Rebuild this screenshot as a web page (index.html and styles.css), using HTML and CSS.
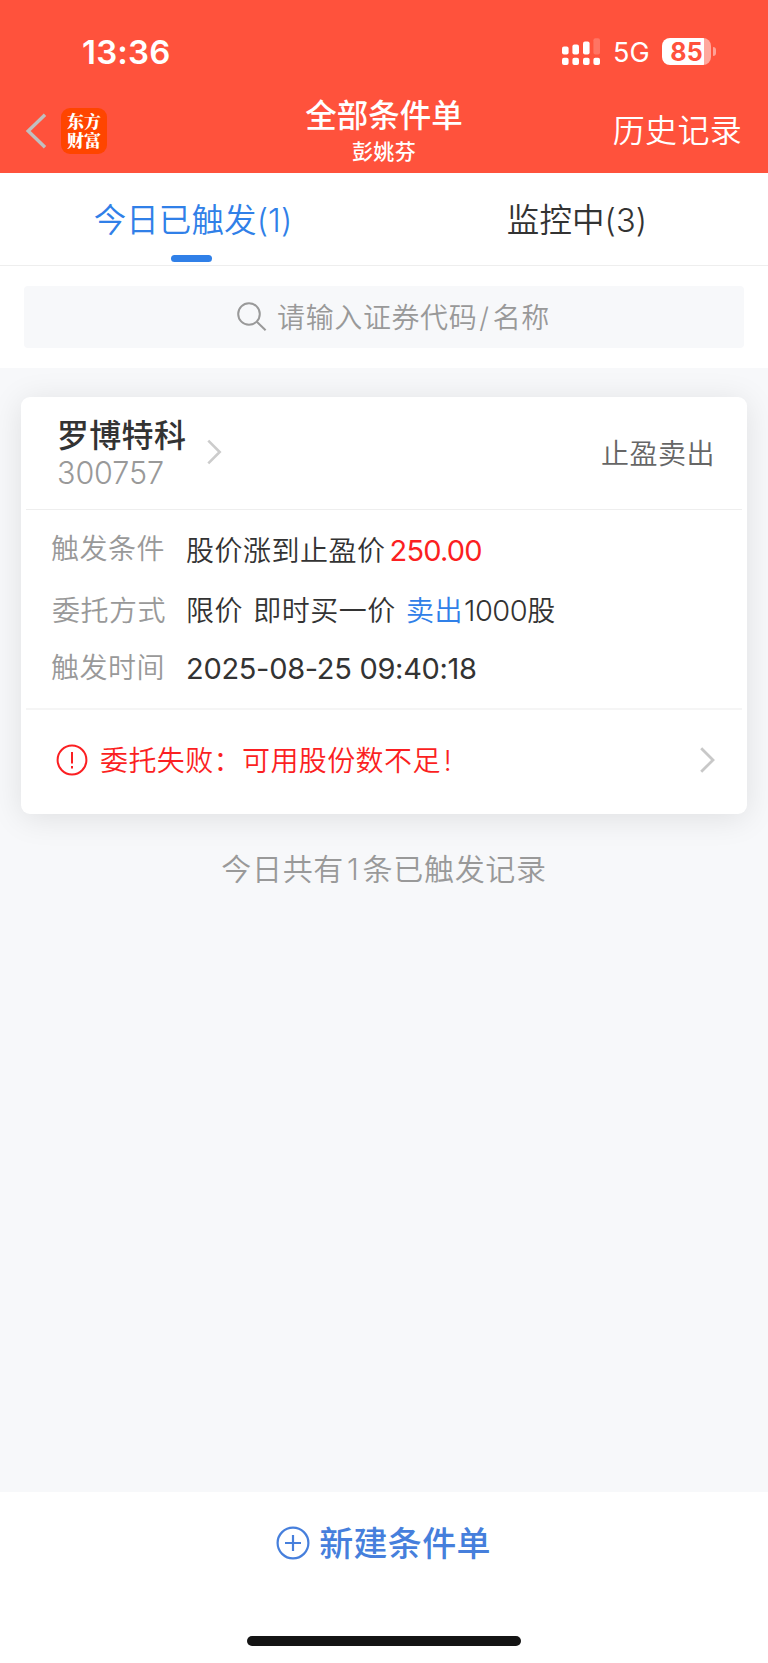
FILE: index.html
```html
<!DOCTYPE html>
<html lang="zh-CN">
<head>
<meta charset="utf-8">
<title>全部条件单</title>
<link rel="stylesheet" href="styles.css">
</head>
<body>
<div class="screen">
  <header class="top">
    <div class="status">
      <span class="time">13:36</span>
      <div class="status-right">
        <svg class="signal" width="40" height="28" viewBox="0 0 40 28" fill="#fff">
          <rect x="1" y="8.5" width="6.6" height="8" rx="2"/>
          <rect x="11.4" y="6.5" width="6.6" height="10" rx="2"/>
          <rect x="22" y="3.5" width="6.6" height="13" rx="2"/>
          <rect x="32.4" y="0.3" width="6.6" height="16.2" rx="2" opacity=".2"/>
          <rect x="1" y="19.7" width="6.6" height="7.3" rx="2"/>
          <rect x="11.4" y="19.7" width="6.6" height="7.3" rx="2"/>
          <rect x="22" y="19.7" width="6.6" height="7.3" rx="2"/>
          <rect x="32.4" y="19.7" width="6.6" height="7.3" rx="2"/>
        </svg>
        <span class="net">5G</span>
        <div class="battery"><div class="cell"><span class="level">85</span></div><i class="tip"></i></div>
      </div>
    </div>
    <nav class="nav">
      <div class="nav-left">
        <svg width="22" height="36" viewBox="0 0 22 36" fill="none" stroke="#c0bfbf" stroke-width="3.4"><path d="M20 1.8 3.2 18 20 34.2"/></svg>
        <div class="logo">东方<br>财富</div>
      </div>
      <div class="nav-title"><h1>全部条件单</h1><p>彭姚芬</p></div>
      <a class="history">历史记录</a>
    </nav>
  </header>
  <div class="tabs">
    <div class="tab active"><span>今日已触发<span class="count">(1)</span></span></div>
    <div class="tab"><span>监控中<span class="count">(3)</span></span></div>
  </div>
  <div class="search-wrap">
    <div class="search">
      <svg width="30" height="30" viewBox="0 0 30 30" fill="none" stroke="#999" stroke-width="2"><circle cx="12" cy="12" r="10.8"/><path d="m19.8 19.8 8.8 8.4"/></svg>
      <span>请输入证券代码<b class="slash">/</b>名称</span>
    </div>
  </div>
  <main class="content">
    <section class="card">
      <div class="card-head">
        <div class="stock"><div class="name">罗博特科</div><div class="code">300757</div></div>
        <svg class="go" width="15" height="26" viewBox="0 0 15 26" fill="none" stroke="#ccc" stroke-width="2.6"><path d="m1.3 1.6 11.4 11.4L1.3 24.4"/></svg>
        <div class="kind">止盈卖出</div>
      </div>
      <div class="rows">
        <div class="row r1"><span class="label">触发条件</span><span class="value">股价涨到止盈价<em class="price">250.00</em></span></div>
        <div class="row r2"><span class="label">委托方式</span><span class="value">限价 即时买一价 <em class="sell">卖出</em><span class="qty">1000</span>股</span></div>
        <div class="row r3"><span class="label">触发时间</span><span class="value date">2025-08-25 09:40:18</span></div>
      </div>
      <div class="fail">
        <svg width="32" height="32" viewBox="0 0 32 32" fill="none" stroke="#fb1f22" stroke-width="2"><circle cx="16" cy="16" r="14.4"/><path d="M16 8v11.5M16 22v2.6"/></svg>
        <span class="reason">委托失败：可用股份数不足<span class="bang">!</span></span>
        <svg class="go2" width="16" height="26" viewBox="0 0 16 26" fill="none" stroke="#c8c8c8" stroke-width="2.8"><path d="M1.2 1.2 13 13 1.2 24.8"/></svg>
      </div>
    </section>
    <p class="summary">今日共有<span class="one">1</span>条已触发记录</p>
  </main>
  <footer class="bottom">
    <div class="create">
      <svg width="34" height="34" viewBox="0 0 34 34" fill="none" stroke="#467fdc" stroke-width="2.2"><circle cx="17" cy="17" r="15.4"/><path d="M9 17h16M17 9v16"/></svg>
      <span>新建条件单</span>
    </div>
    <div class="home"></div>
  </footer>
</div>
</body>
</html>
```

FILE: styles.css
```css
* { box-sizing: border-box; margin: 0; padding: 0; }
body { background: #fff; font-family: "Noto Sans CJK SC", sans-serif; font-weight: 350; color: #333; }
svg { display: block; flex: none; }
em, i, b { font-style: normal; font-weight: inherit; }
.screen { width: 768px; height: 1663px; display: flex; flex-direction: column; white-space: nowrap; overflow: hidden; }

.top { height: 173px; background: #ff523c; color: #fff; }
.status { height: 102px; padding: 1px 52px 0 82px; display: flex; align-items: center; justify-content: space-between; font-family: Inter, sans-serif; }
.time { font-size: 33px; font-weight: 600; line-height: 40px; letter-spacing: .2px; }
.status-right { display: flex; align-items: center; }
.signal { margin-right: 12px; }
.net { width: 37px; margin-right: 12px; font-size: 27px; font-weight: 400; line-height: 34px; padding-top: 2px; }
.battery { display: flex; align-items: center; gap: 2px; }
.cell { width: 49px; height: 27px; border-radius: 8px; background: linear-gradient(90deg, #fff 42px, #ffa89d 42px); text-align: center; }
.level { display: block; font-size: 25px; font-weight: 700; line-height: 28px; color: #ff523c; }
.tip { width: 3px; height: 9px; border-radius: 0 4px 4px 0; background: #ffa196; }
.nav { height: 71px; display: grid; grid-template-columns: 1fr auto 1fr; }
.nav-left { display: flex; align-items: center; height: 57px; padding-left: 25px; gap: 14px; }
.logo { width: 46px; height: 46px; border-radius: 9px; background: #ff4500; font-family: "Noto Serif CJK SC", "Noto Sans CJK SC", sans-serif; font-weight: 900; font-size: 17px; line-height: 19px; text-align: center; padding-top: 3px; }
.nav-title { text-align: center; }
h1 { font-size: 31.5px; font-weight: 500; line-height: 36px; height: 36px; margin-top: -7px; }
.nav-title p { font-size: 21px; line-height: 26px; font-weight: 500; margin-top: 6px; letter-spacing: .3px; }
.history { justify-self: end; font-size: 32px; line-height: 36px; margin-top: 8px; margin-right: 26px; letter-spacing: .3px; }

.tabs { height: 93px; display: flex; border-bottom: 1px solid #eee; }
.tab { flex: 1; text-align: center; font-size: 32.5px; line-height: 36px; padding: 27px 0 0 2px; letter-spacing: .1px; }
.active { color: #3080e8; }
.active::after { content: ""; display: block; width: 41px; height: 7px; border-radius: 4px; background: #3080e8; margin: 21px 0 0 169px; }
.active > span { display: block; height: 34px; }
.count { font-family: Inter, sans-serif; font-weight: 350; }

.search-wrap { height: 102px; padding: 20px 24px; }
.search { height: 62px; border-radius: 4px; background: #f7f8fa; color: #999; display: flex; align-items: center; justify-content: center; gap: 10px; padding-left: 19px; font-size: 28px; letter-spacing: .6px; line-height: 36px; }
.slash { font-family: Inter, sans-serif; margin: 0 3px 0 2px; }

.content { flex: 1; background: #f7f8fa; padding: 29px 21px 0; }
.card { height: 417px; border-radius: 9px; background: #fff; box-shadow: 0 4px 32px rgba(0,0,0,.1); padding: 0 5px; }
.card-head { height: 113px; display: flex; padding: 0 27px 0 31px; border-bottom: 1px solid #eee; }
.stock { width: 150px; }
.name { font-size: 32px; font-weight: 500; line-height: 36px; margin-top: 18px; letter-spacing: .3px; }
.code { font-family: Inter, sans-serif; font-weight: 350; font-size: 30.5px; line-height: 36px; margin-top: 4px; color: #999; letter-spacing: -.1px; }
.go { margin-top: 42px; }
.kind { margin-left: auto; font-size: 28px; line-height: 36px; margin-top: 37px; letter-spacing: .5px; color: #666; }
.rows { height: 200px; padding: 19px 0 0 25px; border-bottom: 2px solid #f5f5f5; font-size: 28px; line-height: 36px; }
.row { display: flex; height: 36px; }
.label { width: 135px; color: #999; letter-spacing: .5px; }
.value { letter-spacing: .5px; }
.price, .qty, .date { font-family: Inter, sans-serif; font-size: 29px; font-weight: 400; }
.price { color: #fb1f22; margin-left: 4px; letter-spacing: -.8px; }
.qty { font-weight: 350; letter-spacing: -.5px; margin-left: 1px; }
.sell { color: #3080e8; }
.date { letter-spacing: -.3px; padding-top: 3px; }
.r1 .value { padding-top: 2px; }
.r2 { margin-top: 26px; word-spacing: 3.5px; }
.r2 .label { padding-left: 1px; }
.r3 { margin-top: 21px; }
.fail { height: 100px; display: flex; align-items: center; padding: 0 26px 0 30px; color: #fb1f22; font-size: 28px; line-height: 36px; letter-spacing: .4px; }
.reason { margin-left: 12px; }
.bang { font-family: Inter, sans-serif; margin-left: 3px; }
.go2 { margin-left: auto; }
.summary { margin-top: 37px; text-align: center; color: #999; font-size: 30px; line-height: 36px; letter-spacing: .7px; }
.one { font-family: Inter, sans-serif; margin: 0 3px; }
.card + .summary { margin-top: 35px; }

.bottom { height: 171px; background: #fff; display: flex; flex-direction: column; align-items: center; justify-content: space-between; padding: 33px 0 17px; }
.create { display: flex; gap: 9px; color: #467fdc; font-size: 34px; font-weight: 500; line-height: 32px; letter-spacing: .3px; margin-right: 1px; padding-top: 1px; }
.home { width: 274px; height: 10px; border-radius: 5px; background: #141414; }
```
